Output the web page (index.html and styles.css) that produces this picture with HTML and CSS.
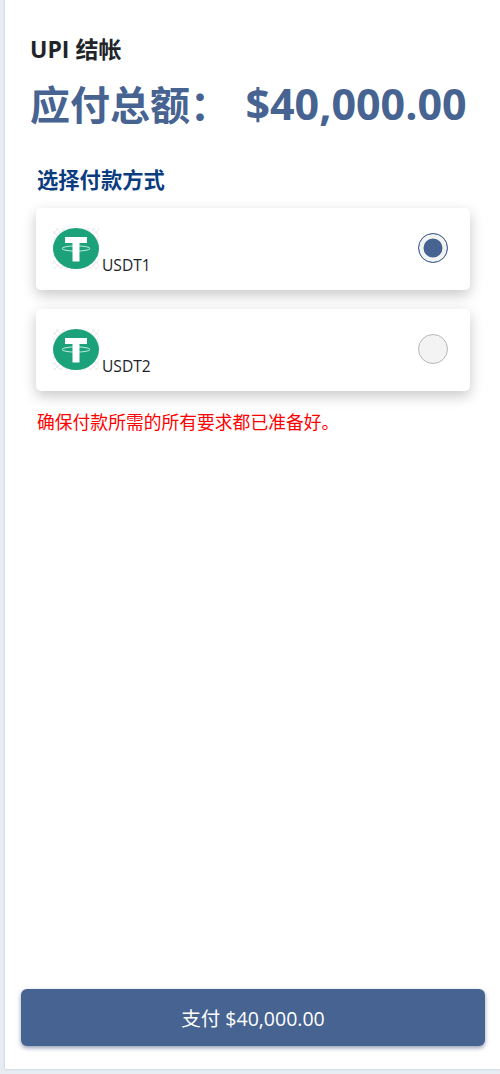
FILE: index.html
```html
<!DOCTYPE html>
<html lang="zh">
    <head>
        <meta charset="utf-8">
        <title>UPI 结帐</title>
        <link rel="stylesheet" href="styles.css">
    </head>
    <body>
        <div class="checkout">
            <div class="summary">
                <h1 class="title">UPI 结帐</h1>
                <div class="total">应付总额： <span class="amount">$40,000.00</span></div>
            </div>
            <div class="methods">
                <h2 class="methods-title">选择付款方式</h2>
                <div class="method">
                    <div class="method-name">
                        <svg class="logo" viewBox="0 0 46 41">
                            <ellipse cx="23" cy="20.500" rx="23" ry="20.500" fill="#1ba27a"/>
                            <ellipse cx="23" cy="20.500" rx="14" ry="2.600" fill="none" stroke="#d5f0e7" stroke-width="0.900"/>
                            <path d="M12 9h22v6h-7.500v18.500h-7v-18.500h-7.500z" fill="#fff"/>
                        </svg>
                        <span class="method-label">USDT1</span>
                    </div>
                    <span class="radio radio-on"></span>
                </div>
                <div class="method">
                    <div class="method-name">
                        <svg class="logo" viewBox="0 0 46 41">
                            <ellipse cx="23" cy="20.500" rx="23" ry="20.500" fill="#1ba27a"/>
                            <ellipse cx="23" cy="20.500" rx="14" ry="2.600" fill="none" stroke="#d5f0e7" stroke-width="0.900"/>
                            <path d="M12 9h22v6h-7.500v18.500h-7v-18.500h-7.500z" fill="#fff"/>
                        </svg>
                        <span class="method-label">USDT2</span>
                    </div>
                    <span class="radio"></span>
                </div>
                <p class="notice">确保付款所需的所有要求都已准备好。</p>
            </div>
            <div class="footer">
                <button class="pay">支付 $40,000.00</button>
            </div>
        </div>
    </body>
</html>
```

FILE: styles.css
```css
* {
    box-sizing: border-box;
}

html,
body {
    height: 100%;
}

body {
    margin: 0;
    padding: 0 0 5px 5px;
    background-color: #e8edf4;
    font-family: "Open Sans", "Noto Sans CJK SC", sans-serif;
    color: #212529;
}

.checkout {
    display: flex;
    flex-direction: column;
    height: 100%;
    background-color: #fff;
    box-shadow: 0 0 2px rgba(120, 135, 160, 0.5);
}

.summary {
    padding: 35px 25px 0;
}

.title {
    margin: 0;
    font-size: 23px;
    line-height: 28px;
    font-weight: 700;
}

.total {
    margin-top: 14px;
    font-size: 40px;
    line-height: 54px;
    font-weight: 700;
    color: #466391;
    white-space: pre;
}

.amount {
    margin-left: 5px;
    font-size: 43px;
}

.methods {
    flex: 1;
    padding: 34px 30px 0 31px;
}

.methods-title {
    margin: 0 0 14px 1px;
    font-size: 21.300px;
    line-height: 28px;
    font-weight: 700;
    color: #0c3c80;
}

.method {
    display: flex;
    align-items: center;
    justify-content: space-between;
    height: 82px;
    margin-bottom: 19px;
    padding: 0 22px 2px 17px;
    background-color: #fff;
    border-radius: 5px;
    box-shadow: 0 5px 14px rgba(0, 0, 0, 0.22);
}

.method-name {
    display: flex;
    align-items: flex-end;
}

.logo {
    display: block;
    width: 46px;
    height: 41px;
    background: repeating-conic-gradient(#f1f1f1 0 25%, #fff 0 50%) 0 0 / 6px 6px;
}

.method-label {
    margin: 0 0 -6px 3px;
    font-size: 15.600px;
    line-height: 20px;
}

.radio {
    width: 30px;
    height: 30px;
    border: 1px solid #b8b8b8;
    border-radius: 50%;
    background-color: #f3f3f3;
}

.radio-on {
    border-color: #466391;
    background-color: #466391;
    box-shadow: inset 0 0 0 4.500px #f3f3f3;
}

.notice {
    margin: 9px 0 0 1px;
    font-size: 17.800px;
    line-height: 24px;
    color: #f00;
}

.footer {
    padding: 0 15px 23px 16px;
}

.pay {
    display: block;
    width: 100%;
    height: 57px;
    border: 0;
    border-radius: 6px;
    background-color: #466391;
    box-shadow: 0 2px 4px rgba(40, 60, 100, 0.5);
    color: #fff;
    font-family: inherit;
    font-size: 19.500px;
}
```
